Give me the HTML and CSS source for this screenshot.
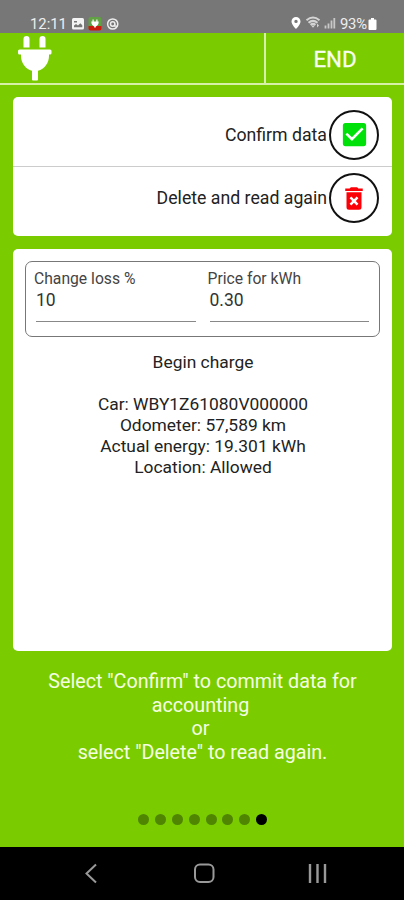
FILE: index.html
```
<!DOCTYPE html>
<html lang="en">
<head>
<meta charset="utf-8">
<title>Charge data</title>
<link rel="stylesheet" href="styles.css">
</head>
<body>
<div class="status">
  <span class="clock">12:11</span>
  <svg class="notes" width="50" height="14" viewBox="0 0 50 14">
    <rect x="1" y="1" width="12" height="11.5" rx="1.5" fill="#f4f4f4"/>
    <path d="M3 10.3V8.500l2-1.500 2 1.600 2.300-2.300 2 2v2z" fill="#777"/>
    <path d="M3 4h3v1.500H3z" fill="#777"/>
    <rect x="17.500" y="0" width="13" height="13" rx="2" fill="#62a044"/>
    <path d="M17.500 9h13v2.500a2 2 0 0 1-2 2h-9a2 2 0 0 1-2-2z" fill="#c91c0b"/>
    <path d="M21.500 2.500v2h-1.200c0 3 1.300 4 2.900 5v1h1.600v-1c1.700-1 2.900-2 2.900-5h-1.200v-2h-1.200v2h-2.600v-2z" fill="#fff"/>
    <circle cx="41.700" cy="7" r="5.100" fill="none" stroke="#eee" stroke-width="1.500"/>
    <circle cx="41.700" cy="7" r="2.200" fill="none" stroke="#eee" stroke-width="1.500"/>
    <path d="M43.700 7v2.200h3" fill="none" stroke="#eee" stroke-width="1.200"/>
  </svg>
  <svg class="signals" width="46" height="14" viewBox="0 0 46 14">
    <path fill-rule="evenodd" d="M5 1a4.500 4.500 0 0 0-4.500 4.500C.5 8.500 5 13 5 13s4.500-4.500 4.500-7.500A4.500 4.500 0 0 0 5 1zm0 2.700a1.700 1.700 0 1 1 0 3.400 1.700 1.700 0 0 1 0-3.400z" fill="#fff"/>
    <path d="M15.500 4.200c4-3.300 9-3.300 13 0M17.500 6.700c3-2.400 6-2.400 9 0M19.500 8.900c1.500-1.200 3.500-1.200 5 0" fill="none" stroke="#d4d4d4" stroke-width="2"/>
    <path d="M20 9.500l2 2.200 2-2.200zM26 7.500l2 2-2 2z" fill="#d4d4d4"/>
    <path d="M34.500 12.500v-3M37.500 12.500v-5M40.500 12.500V4.500M43.300 12.500V2" stroke="#c8c8c8" stroke-width="1.800"/>
  </svg>
  <span class="percent">93%</span>
  <svg class="battery" width="9" height="12" viewBox="0 0 9 12"><path d="M1.500 1.500h1.500V0h3v1.500h1.500A1 1 0 0 1 8.500 2.500V11a1 1 0 0 1-1 1h-6a1 1 0 0 1-1-1V2.500a1 1 0 0 1 1-1z" fill="#fff"/></svg>
</div>
<header class="bar">
  <div class="brand">
    <svg width="36" height="46" viewBox="0 0 36 46">
      <path d="M6.500 12.500V4a3 3 0 0 1 6 0v8.500zM22.500 12.500V4a3 3 0 0 1 6 0v8.500z" fill="#fff"/>
      <path d="M2.500 14.500H33a1.500 1.500 0 0 1 1.500 1.500V18a1.500 1.500 0 0 1-1.500 1.500H32V21c0 7-4.500 13-11 14.800V44.500a1 1 0 0 1-1 1H16a1 1 0 0 1-1-1V35.800C8.500 34 4 28 4 21v-1.500H2.500A1.500 1.500 0 0 1 1 18v-2a1.500 1.500 0 0 1 1.500-1.500z" fill="#fff"/>
    </svg>
  </div>
  <div class="end">END</div>
</header>
<main class="content">
  <section class="card actions">
    <div class="action first"><span>Confirm data</span>
      <div class="ring"><svg width="31" height="31" viewBox="0 0 24 24"><path d="M19 3H5a2 2 0 0 0-2 2v14a2 2 0 0 0 2 2h14a2 2 0 0 0 2-2V5a2 2 0 0 0-2-2zm-9 14l-5-5 1.410-1.410L10 14.170l7.590-7.590L19 8z" fill="#00e10a"/></svg></div>
    </div>
    <div class="action"><span>Delete and read again</span>
      <div class="ring"><svg width="30" height="31" viewBox="0 0 24 24"><path d="M6 19a2 2 0 0 0 2 2h8a2 2 0 0 0 2-2V7H6v12zm2.460-7.120l1.410-1.410L12 12.590l2.120-2.120 1.410 1.410L13.410 14l2.120 2.120-1.410 1.410L12 15.410l-2.120 2.120-1.410-1.410L10.590 14zM15.500 4l-1-1h-5l-1 1H5v2h14V4z" fill="#fb0007"/></svg></div>
    </div>
  </section>
  <section class="card details">
    <div class="fields">
      <div class="field"><span class="label">Change loss %</span><span class="value">10</span></div>
      <div class="field"><span class="label">Price for kWh</span><span class="value">0.30</span></div>
    </div>
    <div class="report">
      <p>Begin charge</p>
      <p class="gap"></p>
      <p>Car: WBY1Z61080V000000</p>
      <p>Odometer: 57,589 km</p>
      <p>Actual energy: 19.301 kWh</p>
      <p>Location: Allowed</p>
    </div>
  </section>
  <div class="hint">
    <p>Select "Confirm" to commit data for</p>
    <p class="short">accounting</p>
    <p class="short">or</p>
    <p>select "Delete" to read again.</p>
  </div>
  <div class="dots"><i></i><i></i><i></i><i></i><i></i><i></i><i></i><i class="on"></i></div>
</main>
<nav class="nav">
  <svg width="404" height="53" viewBox="0 0 404 53" fill="none" stroke="#999" stroke-width="2">
    <path d="M96 17.500L86.500 26.500 96 35.500"/>
    <rect x="195" y="17.500" width="18.500" height="17.500" rx="5"/>
    <path d="M310 17v19M317.500 17v19M325 17v19" stroke-width="2.400"/>
  </svg>
</nav>
</body>
</html>
```
FILE: styles.css
```
* { box-sizing: border-box; }
body {
  margin: 0;
  width: 404px;
  height: 900px;
  overflow: hidden;
  display: flex;
  flex-direction: column;
  background: #7acc00;
  font-family: Roboto, "Liberation Sans", sans-serif;
  color: #222;
}
p { margin: 0; }
svg { display: block; flex: none; }
.status {
  height: 33px;
  flex: none;
  display: flex;
  align-items: flex-start;
  background: #777;
  color: #eee;
  padding: 16px 27px 0 30px;
  font-size: 14.800px;
  line-height: 17px;
}
.clock { width: 41px; }
.notes { margin-top: 1px; }
.signals { margin: 0 3px 0 auto; }
.percent { width: 27px; font-size: 14.800px; letter-spacing: -0.200px; }
.battery { margin: 2px 0 0 1px; }
.bar {
  height: 52px;
  flex: none;
  display: flex;
  border-bottom: 2px solid #d6f0a8;
}
.brand { flex: 1; padding: 2px 0 0 17px; }
.end {
  width: 140px;
  border-left: 2px solid #d6f0a8;
  color: #f8fff0;
  font-size: 22.300px;
  line-height: 52px;
  text-align: center;
  -webkit-text-stroke: 0.300px #f8fff0;
}
.content {
  flex: 1;
  display: flex;
  flex-direction: column;
  padding: 12px 12px 0 13px;
}
.card { background: #fff; border-radius: 5px; flex: none; }
.actions { height: 139px; }
.action {
  height: 69px;
  display: flex;
  align-items: flex-start;
  justify-content: flex-end;
  gap: 2px;
  padding: 6px 13px 0 0;
  font-size: 17.700px;
  line-height: 51px;
}
.action.first { height: 70px; padding-top: 12.500px; border-bottom: 1px solid #ccc; }
.ring {
  width: 50px;
  height: 50px;
  border: 2px solid #111;
  border-radius: 50%;
  display: flex;
  align-items: center;
  justify-content: center;
}
.details { height: 402px; margin-top: 13px; padding: 12px 12px 0; }
.fields {
  height: 76px;
  display: flex;
  gap: 14px;
  padding: 7px 10px 0;
  border: 1px solid #777;
  border-radius: 7px;
}
.field { flex: 1; height: 53px; border-bottom: 1px solid #888; display: flex; flex-direction: column; }
.label { font-size: 15.700px; line-height: 19px; color: #444; margin-left: -2px; }
.value { font-size: 17.500px; line-height: 24px; color: #333; }
.report {
  margin-top: 15px;
  text-align: center;
  font-size: 17.400px;
  line-height: 21px;
  padding-left: 1px;
}
.gap { height: 21px; }
.hint {
  margin-top: 19px;
  text-align: center;
  color: #f5ffe2;
  font-size: 19.700px;
  line-height: 23.700px;
}
.short { padding-right: 4px; }
.dots { display: flex; gap: 5.900px; margin: 49px 0 0 125px; }
.dots i { width: 11px; height: 11px; border-radius: 50%; background: #4f8500; }
.dots .on { background: #000; }
.nav { height: 53px; flex: none; background: #000; }
```
